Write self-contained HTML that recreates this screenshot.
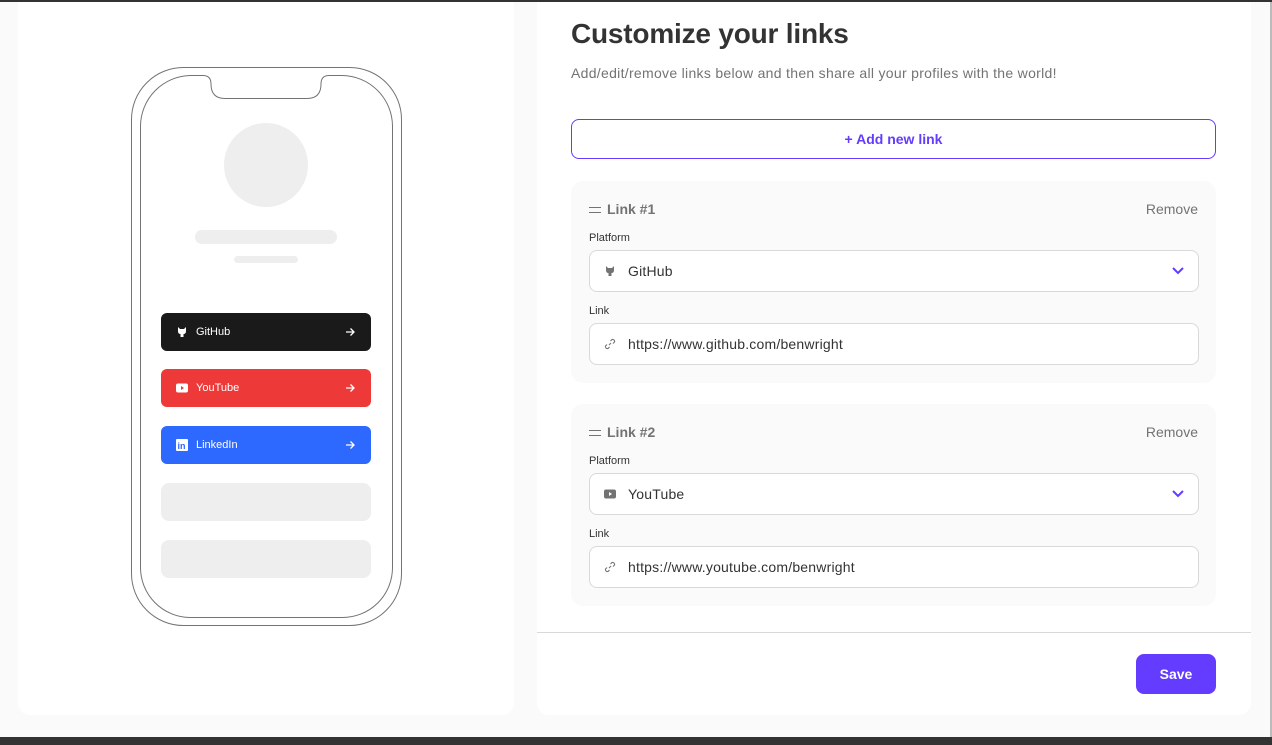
<!DOCTYPE html>
<html><head><meta charset="utf-8"><style>
*{box-sizing:border-box;margin:0;padding:0}
body{width:1272px;height:745px;background:#fafafa;font-family:"Liberation Sans",sans-serif;position:relative;overflow:hidden}
.topbar{position:absolute;left:0;top:0;width:1272px;height:2px;background:#333;z-index:5}
.botbar{position:absolute;left:0;top:737px;width:1272px;height:8px;background:#333}
.rline{position:absolute;left:1270px;top:0;width:2px;height:737px;background:#bbb}
.card{position:absolute;background:#fff;border-radius:12px}
.pl{position:absolute;left:161px;width:210px;height:38px;border-radius:6px;color:#fff;font-size:11px;display:flex;align-items:center;padding-left:15px}
.pl span{margin-left:8px;flex:1}
.pl .ar{margin-right:16px}
.grey{position:absolute;left:161px;width:210px;height:38px;border-radius:8px;background:#eee}
.lk{position:absolute;left:571px;width:645px;height:202px;background:#fafafa;border-radius:12px}
.lk .t{position:absolute;left:36px;top:20px;font-weight:bold;font-size:14px;color:#737373}
.lk .hb{position:absolute;left:18px;top:26px}
.lk .r{position:absolute;right:18px;top:20px;font-size:14px;color:#737373}
.lk .lab{position:absolute;left:18px;font-size:11px;color:#333}
.lk .in{position:absolute;left:18px;width:610px;height:42px;background:#fff;border:1px solid #d9d9d9;border-radius:8px;font-size:14px;color:#333;display:flex;align-items:center;padding-left:38px;letter-spacing:0.2px}
.ic{position:absolute;left:14px;top:14px}
</style></head><body>
<div class="topbar"></div>
<div class="card" style="left:18px;top:-10px;width:496px;height:725px"></div>
<div class="card" style="left:537px;top:-10px;width:714px;height:725px"></div>
<svg style="position:absolute;left:0;top:0" width="520" height="700">
<rect x="131.5" y="67.5" width="270" height="558" rx="52" fill="none" stroke="#737373"/>
<path d="M190 75.5 H203 Q211 75.5 211 84 Q211 98.5 225 98.5 H307 Q321 98.5 321 84 Q321 75.5 329 75.5 H342 A51 51 0 0 1 392.5 126 V567 A50 50 0 0 1 342 617.5 H190 A50 50 0 0 1 140.5 567 V126 A51 51 0 0 1 190 75.5 Z" fill="none" stroke="#737373"/>
<circle cx="266" cy="165" r="42" fill="#eee"/>
<rect x="195" y="230" width="142" height="14" rx="7" fill="#eee"/>
<rect x="234" y="256" width="64" height="7" rx="3.5" fill="#eee"/>
</svg>
<div class="pl" style="top:313px;background:#1a1a1a"><svg width="12" height="12" viewBox="0 0 12 12"><path d="M2 1 L4 3 H8 L10 1 V5 Q10 8 7.5 8 V11 H4.5 V8 Q2 8 2 5Z" fill="#fff"/></svg><span>GitHub</span><svg class="ar" width="10" height="10" viewBox="0 0 10 10"><path d="M1 5 H9 M5.5 1.5 L9 5 L5.5 8.5" fill="none" stroke="#fff" stroke-width="1.3"/></svg></div>
<div class="pl" style="top:369px;background:#ee3939"><svg width="12" height="12" viewBox="0 0 12 12"><rect x="0" y="1.5" width="12" height="9" rx="2" fill="#fff"/><path d="M5 4 L8 6 L5 8Z" fill="#ee3939"/></svg><span>YouTube</span><svg class="ar" width="10" height="10" viewBox="0 0 10 10"><path d="M1 5 H9 M5.5 1.5 L9 5 L5.5 8.5" fill="none" stroke="#fff" stroke-width="1.3"/></svg></div>
<div class="pl" style="top:426px;background:#2d68ff"><svg width="12" height="12" viewBox="0 0 12 12"><rect width="12" height="12" rx="1" fill="#fff"/><text x="1.5" y="10" font-size="9" font-weight="bold" fill="#2d68ff" font-family="Liberation Sans">in</text></svg><span>LinkedIn</span><svg class="ar" width="10" height="10" viewBox="0 0 10 10"><path d="M1 5 H9 M5.5 1.5 L9 5 L5.5 8.5" fill="none" stroke="#fff" stroke-width="1.3"/></svg></div>
<div class="grey" style="top:483px"></div>
<div class="grey" style="top:540px"></div>

<div style="position:absolute;left:571px;top:18px;font-size:28px;font-weight:bold;color:#333;letter-spacing:-0.2px">Customize your links</div>
<div style="position:absolute;left:571px;top:65px;font-size:14px;color:#737373;letter-spacing:0.3px">Add/edit/remove links below and then share all your profiles with the world!</div>
<div style="position:absolute;left:571px;top:119px;width:645px;height:40px;border:1px solid #633cff;border-radius:8px;color:#633cff;font-weight:bold;font-size:14px;display:flex;align-items:center;justify-content:center">+ Add new link</div>

<div class="lk" style="top:181px">
<svg class="hb" width="12" height="6"><path d="M0 .5 H12 M0 5.5 H12" stroke="#737373"/></svg>
<div class="t">Link #1</div><div class="r">Remove</div>
<div class="lab" style="top:51px">Platform</div>
<div class="in" style="top:69px"><svg class="ic" width="12" height="12" viewBox="0 0 12 12"><path d="M2 1 L4 3 H8 L10 1 V5 Q10 8 7.5 8 V11 H4.5 V8 Q2 8 2 5Z" fill="#737373"/></svg>GitHub<svg style="position:absolute;right:14px;top:16px" width="12" height="8" viewBox="0 0 12 8"><path d="M1 1 L6 6 L11 1" fill="none" stroke="#633cff" stroke-width="2"/></svg></div>
<div class="lab" style="top:124px">Link</div>
<div class="in" style="top:142px"><svg class="ic" width="12" height="12" viewBox="0 0 12 12"><path d="M5 7 L7 5 M6.5 3 L8 1.5 A2 2 0 0 1 10.5 4 L9 5.5 M5.5 9 L4 10.5 A2 2 0 0 1 1.5 8 L3 6.5" fill="none" stroke="#737373" stroke-width="1.1"/></svg>https://www.github.com/benwright</div>
</div>
<div class="lk" style="top:404px">
<svg class="hb" width="12" height="6"><path d="M0 .5 H12 M0 5.5 H12" stroke="#737373"/></svg>
<div class="t">Link #2</div><div class="r">Remove</div>
<div class="lab" style="top:51px">Platform</div>
<div class="in" style="top:69px"><svg class="ic" width="12" height="12" viewBox="0 0 12 12"><rect x="0" y="1.5" width="12" height="9" rx="2" fill="#737373"/><path d="M5 4 L8 6 L5 8Z" fill="#fff"/></svg>YouTube<svg style="position:absolute;right:14px;top:16px" width="12" height="8" viewBox="0 0 12 8"><path d="M1 1 L6 6 L11 1" fill="none" stroke="#633cff" stroke-width="2"/></svg></div>
<div class="lab" style="top:124px">Link</div>
<div class="in" style="top:142px"><svg class="ic" width="12" height="12" viewBox="0 0 12 12"><path d="M5 7 L7 5 M6.5 3 L8 1.5 A2 2 0 0 1 10.5 4 L9 5.5 M5.5 9 L4 10.5 A2 2 0 0 1 1.5 8 L3 6.5" fill="none" stroke="#737373" stroke-width="1.1"/></svg>https://www.youtube.com/benwright</div>
</div>
<div style="position:absolute;left:537px;top:632px;width:714px;height:83px;background:#fff;border-top:1px solid #d9d9d9;border-radius:0 0 12px 12px"></div>
<div style="position:absolute;left:1136px;top:654px;width:80px;height:40px;background:#633cff;border-radius:8px;color:#fff;font-weight:bold;font-size:14px;display:flex;align-items:center;justify-content:center">Save</div>
<div class="rline"></div>
<div class="botbar"></div>
</body></html>
